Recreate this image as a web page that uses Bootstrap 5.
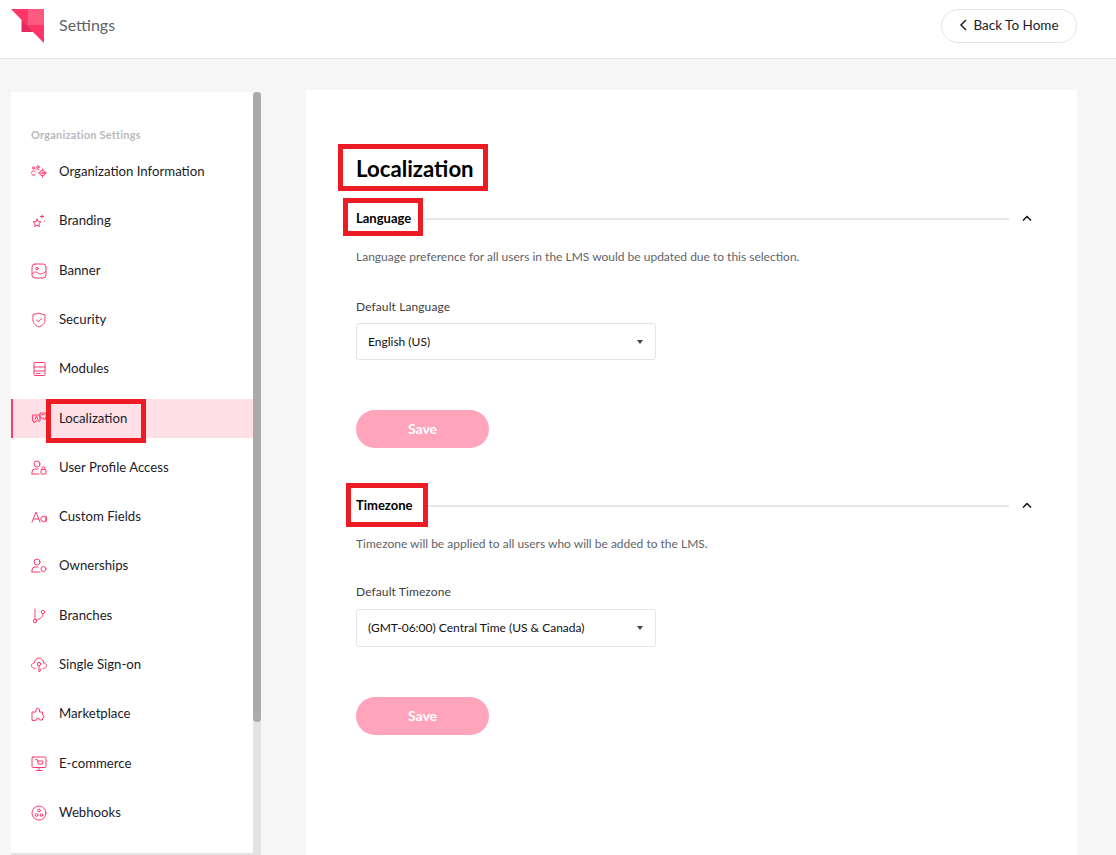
<!DOCTYPE html>
<html lang="en"><head><meta charset="utf-8"><title>Settings</title>
<link href="https://cdn.jsdelivr.net/npm/bootstrap@5.3.0/dist/css/bootstrap.min.css" rel="stylesheet">
<style>
html,body{height:855px;overflow:hidden}
body{font-family:Lato,"Liberation Sans",sans-serif;font-size:14px;background:#f6f6f6;color:#000}
.topbar{height:59px;background:#fff;border-bottom:1px solid #e4e4e4;padding:0 39px 0 11px}
.topbar-title{font-size:16px;color:#5f6368;margin-left:15px;margin-bottom:9px}
.back-btn{width:136px;height:34px;border:1px solid #e3e3e3;border-radius:17px;background:#fff;color:#1c1c28;font-size:13.5px;padding:0 0 1px;margin-top:-7px}
.shell{height:796px;padding:31px 39px 0 11px}
.side-wrap{width:250px;margin-top:2px;height:763px}
.side-panel{width:242px;background:#fff;border-bottom:2px solid #e3e3e3;padding-top:36px;overflow:hidden}
.side-head{font-size:11px;font-weight:700;color:#b9b9bf;padding-left:20px;line-height:14px;margin-bottom:11px;letter-spacing:.2px}
.side-item{height:39px;margin-bottom:10.3px;padding:0 0 1px 20px;color:#1c1c28;text-decoration:none;position:relative;font-size:13.2px}
.side-item svg{width:16px;height:16px;flex:none;margin-right:12px;fill:none;stroke:#ff3b6c;stroke-width:1;stroke-linecap:round;stroke-linejoin:round}
.side-item.current{background:#ffe0e6;border-left:2px solid #ff3b6c;padding-left:18px}
.scroll-track{width:8px;background:#e3e3e3;height:763px}
.scroll-thumb{height:630px;background:#aaa;border-radius:4px}
.content-panel{width:771px;margin-left:45px;background:#fff;padding:50px 44px 0 50px;position:relative;height:765px}
.page-title{font-size:22.2px;font-weight:700;line-height:29px;margin:14px 0 25px;color:#000}
.sect-head{height:20px}
.sect-name{font-size:13px;font-weight:700;line-height:20px;color:#000}
.sect-line{flex:1;height:2px;background:#e6e6e6;margin:2px 0 0 14px}
.sect-chev{width:10px;height:6px;margin-left:13px;margin-right:1px;fill:none;stroke:#111;stroke-width:1.5}
.sect-desc{font-size:12px;color:#5f6368;line-height:16px;margin-top:21px}
.fld-label{font-size:12px;color:#3d3d42;line-height:16px;margin-top:34px;margin-bottom:8px;letter-spacing:.1px}
.fld-select{width:300px;height:37px;border:1px solid #e4e4e4;border-radius:3px;padding:0 12px 0 11px;font-size:12px;color:#111}
.fld-caret{width:0;height:0;border-left:3.5px solid transparent;border-right:3.5px solid transparent;border-top:4px solid #444}
.save-btn{width:133px;height:38px;border:0;border-radius:19px;background:#ffa4bb;color:#fff;font-weight:700;font-size:14px;padding:0 0 2px;margin-top:50px;display:block}
.second{margin-top:47px}
.second .fld-label{margin-top:32px;margin-bottom:9px}
.second .fld-select{height:38px}
.redbox{position:absolute;border:5px solid #ed1c24;pointer-events:none}
.rb-side{left:46px;top:399px;width:100px;height:44px}
.rb-title{left:338px;top:144px;width:150px;height:47px}
.rb-lang{left:343px;top:198px;width:80px;height:38px}
.rb-tz{left:346px;top:483px;width:82px;height:44px}
.logo{width:33px;height:35px;margin-top:-5px}
.back-gap{gap:6px}
</style></head>
<body>
<header class="topbar d-flex align-items-center justify-content-between">
  <div class="d-flex align-items-center">
    <svg class="logo" viewBox="11 9 33 35"><polygon points="11,9 44,9 44,43 33,32 21.700,32 21.700,20" fill="#ff3568"/><polygon points="28,9 44,9 44,25 28,25" fill="#ff5a80"/><polygon points="21.700,20 21.700,32 33,32" fill="#e62a5e"/></svg>
    <span class="topbar-title">Settings</span>
  </div>
  <button class="back-btn btn back-gap d-flex align-items-center justify-content-center"><svg width="8" height="12" viewBox="0 0 8 12" fill="none" stroke="#222" stroke-width="1.5"><path d="M7 1 2 6l5 5"/></svg>Back To Home</button>
</header>
<div class="shell d-flex">
  <div class="side-wrap d-flex">
    <nav class="side-panel">
      <div class="side-head">Organization Settings</div>
      <a class="side-item d-flex align-items-center"><svg viewBox="0 0 16 16"><circle cx="2.500" cy="4" r="1.200"/><circle cx="7" cy="3" r="1.200"/><path d="M.5 9c0-1.500 1-2 2-2s1.500.3 2 1M5 5.500c1-.5 2-.5 3 0M1 11h3"/><circle cx="11.500" cy="9" r="2.700"/><circle cx="11.500" cy="9" r=".8"/><path d="M11.500 5v1.300M11.500 11.700V13M7.500 9h1.300M14.200 9h1.300"/></svg>Organization Information</a>
      <a class="side-item d-flex align-items-center"><svg viewBox="0 0 16 16"><path d="m6 6 1.200 2.600 2.800.3-2.100 1.900.6 2.800L6 12.200l-2.500 1.400.6-2.800L2 8.900l2.800-.3z"/><path d="M11 2v3M9.500 3.500h3M13.500 8h.1"/></svg>Branding</a>
      <a class="side-item d-flex align-items-center"><svg viewBox="0 0 16 16"><rect x="1" y="1" width="14" height="14" rx="3"/><circle cx="6" cy="5.500" r="1.300"/><path d="M1 11c2-2.500 4-2.500 6-1s4 1.500 8-1.500"/></svg>Banner</a>
      <a class="side-item d-flex align-items-center"><svg viewBox="0 0 16 16"><path d="M8 1.200 14 3v5c0 3.500-3 5.800-6 7-3-1.200-6-3.500-6-7V3z"/><path d="m5.500 8 2 1.800 3-3.300"/></svg>Security</a>
      <a class="side-item d-flex align-items-center"><svg viewBox="0 0 16 16"><rect x="3" y="1.500" width="11" height="13" rx="1"/><path d="M3 6h11M3 10h11M5.500 12.500h3"/></svg>Modules</a>
      <a class="side-item current d-flex align-items-center"><svg viewBox="0 0 16 16"><path d="M2 5h7v6H5l-2 2v-2H2z"/><path d="M9 7V3h6v5h-1v2l-2-2h-3"/><path d="m4 9.500 1.500-3.500L7 9.500M11 4.500h2"/></svg>Localization</a>
      <a class="side-item d-flex align-items-center"><svg viewBox="0 0 16 16"><circle cx="6" cy="4" r="3"/><path d="M1 14v-2a3 3 0 0 1 3-3h3M1 14h7"/><rect x="10" y="9.500" width="5" height="4.500" rx=".6"/><path d="M11 9.500V8.200a1.500 1.500 0 0 1 3 0v1.300"/></svg>User Profile Access</a>
      <a class="side-item d-flex align-items-center"><svg viewBox="0 0 16 16"><path d="M1 13 5 3l4 10M2.500 10h5"/><circle cx="12.500" cy="10" r="2.700"/><path d="M15.200 7.300V13"/></svg>Custom Fields</a>
      <a class="side-item d-flex align-items-center"><svg viewBox="0 0 16 16"><circle cx="6" cy="4" r="3"/><path d="M1 14v-2a3 3 0 0 1 3-3h3M1 14h8"/><circle cx="12.500" cy="11" r="2.500"/></svg>Ownerships</a>
      <a class="side-item d-flex align-items-center"><svg viewBox="0 0 16 16"><circle cx="4" cy="13" r="1.700"/><circle cx="12" cy="4" r="1.700"/><path d="M4 11V1M12 6c0 3-3 5-6.500 6"/></svg>Branches</a>
      <a class="side-item d-flex align-items-center"><svg viewBox="0 0 16 16"><path d="M4 11.500C1.500 11.500.5 10 .5 8.500S2 6 3.300 6C3.500 3 6 1 8 1s4.500 2 4.700 5c1.300 0 2.800 1 2.800 2.500S14.500 11.500 12 11.500"/><circle cx="8" cy="7" r="1.700"/><path d="M8 8.700V15l1.300-1V12"/></svg>Single Sign-on</a>
      <a class="side-item d-flex align-items-center"><svg viewBox="0 0 16 16"><path d="M1 14V6h4V4a1.700 1.700 0 0 1 3.500 0v2h3v3a1.500 1.500 0 0 1 0 3v2H8.500a1.700 1.700 0 0 0-3.500 0z"/></svg>Marketplace</a>
      <a class="side-item d-flex align-items-center"><svg viewBox="0 0 16 16"><rect x="1" y="1" width="14" height="10.500" rx="1"/><path d="M5 14.500h6M8 11.500v3M5 3.500h1.300l1 4.500h4l.8-3H7"/></svg>E-commerce</a>
      <a class="side-item d-flex align-items-center"><svg viewBox="0 0 16 16"><circle cx="8" cy="8" r="7"/><circle cx="8" cy="5.500" r="1.400"/><circle cx="5.500" cy="10" r="1.400"/><circle cx="10.500" cy="10" r="1.400"/></svg>Webhooks</a>
    </nav>
    <div class="scroll-track"><div class="scroll-thumb"></div></div>
  </div>
  <main class="content-panel">
    <h1 class="page-title">Localization</h1>
    <section>
      <div class="sect-head d-flex align-items-center">
        <span class="sect-name">Language</span><span class="sect-line"></span>
        <svg class="sect-chev" viewBox="0 0 10 6"><path d="M1 5.500 5 1.500l4 4"/></svg>
      </div>
      <p class="sect-desc mb-0">Language preference for all users in the LMS would be updated due to this selection.</p>
      <div class="fld-label">Default Language</div>
      <div class="fld-select d-flex align-items-center justify-content-between"><span>English (US)</span><span class="fld-caret"></span></div>
      <button class="save-btn btn">Save</button>
    </section>
    <section class="second">
      <div class="sect-head d-flex align-items-center">
        <span class="sect-name">Timezone</span><span class="sect-line"></span>
        <svg class="sect-chev" viewBox="0 0 10 6"><path d="M1 5.500 5 1.500l4 4"/></svg>
      </div>
      <p class="sect-desc mb-0">Timezone will be applied to all users who will be added to the LMS.</p>
      <div class="fld-label">Default Timezone</div>
      <div class="fld-select d-flex align-items-center justify-content-between"><span>(GMT-06:00) Central Time (US &amp; Canada)</span><span class="fld-caret"></span></div>
      <button class="save-btn btn">Save</button>
    </section>
  </main>
</div>
<div class="redbox rb-side"></div><div class="redbox rb-title"></div><div class="redbox rb-lang"></div><div class="redbox rb-tz"></div>
<script src="https://cdn.jsdelivr.net/npm/bootstrap@5.3.0/dist/js/bootstrap.bundle.min.js"></script>
</body></html>
